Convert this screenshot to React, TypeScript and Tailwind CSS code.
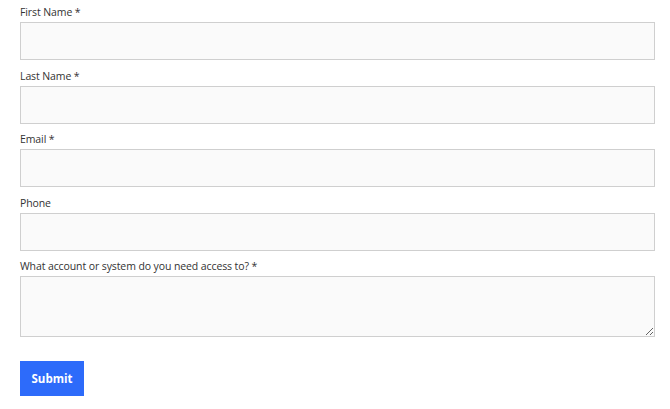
import React from 'react'

const fields = [
  { label: 'First Name *', name: 'first' },
  { label: 'Last Name *', name: 'last' },
  { label: 'Email *', name: 'email' },
  { label: 'Phone', name: 'phone' },
]

export default function App() {
  return (
    <div
      className="min-h-screen bg-white pl-5 pr-[15px] pt-1 text-[#333333]"
      style={{ fontFamily: '"Open Sans", "DejaVu Sans", sans-serif' }}
    >
      <form onSubmit={(e) => e.preventDefault()}>
        {fields.map((f) => (
          <div key={f.name} className="mb-[7.5px]">
            <label className="block text-[10.5px] leading-[16px] tracking-[-0.1px] mb-[2px]">{f.label}</label>
            <input
              name={f.name}
              className="block h-[38px] w-full border border-[#cfcfcf] bg-[#fafafa] px-2 outline-none"
            />
          </div>
        ))}
        <div>
          <label className="block text-[10.5px] leading-[16px] tracking-[-0.1px] mb-[2px]">
            What account or system do you need access to? *
          </label>
          <textarea className="block h-[61px] w-full border border-[#cfcfcf] bg-[#fafafa] px-2 outline-none" />
        </div>
        <button
          type="submit"
          className="mt-6 h-[35px] w-16 bg-[#2d6bfa] text-[11.5px] font-bold text-white"
        >
          Submit
        </button>
      </form>
    </div>
  )
}
